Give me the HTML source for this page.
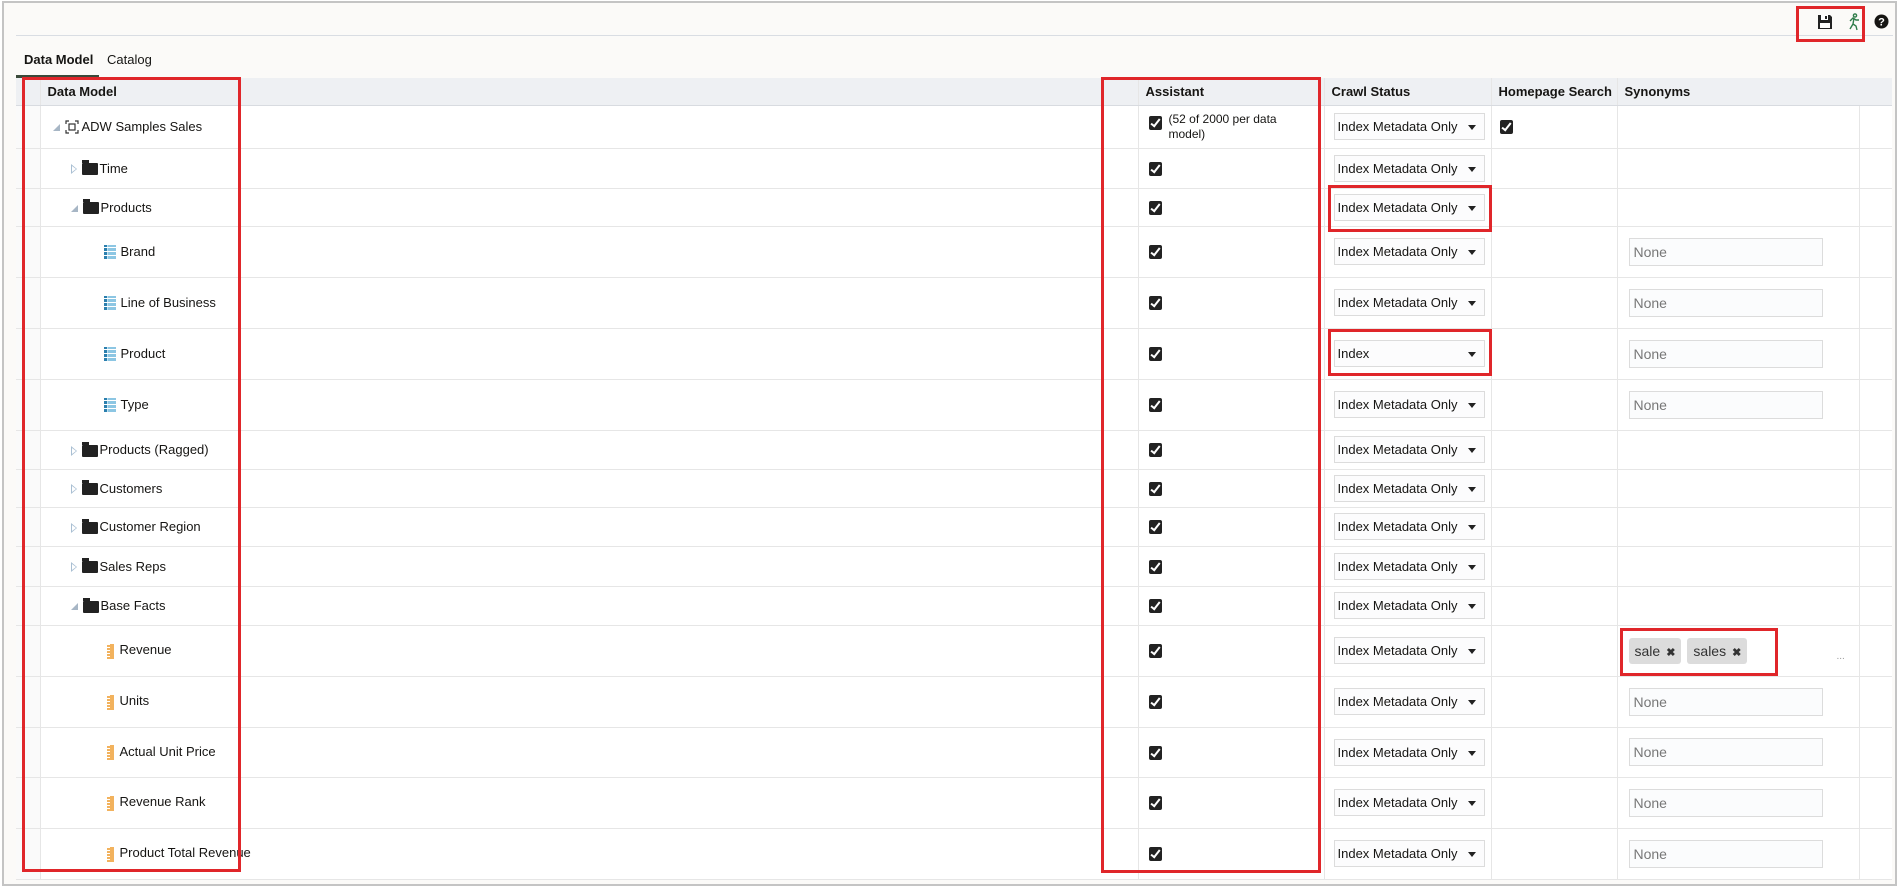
<!DOCTYPE html>
<html><head><meta charset="utf-8"><style>
*{box-sizing:border-box;margin:0;padding:0}
body{width:1899px;height:889px;background:#fff;font-family:"Liberation Sans",sans-serif;font-size:13px;color:#161513;position:relative;overflow:hidden}
.frame{position:absolute;left:2px;top:1px;width:1895px;height:885px;border:2px solid #c4c4c4;background:#fbfaf8}
.topline{position:absolute;left:16px;top:35px;width:1877px;height:1px;background:#d9dde3}
.tab{position:absolute;top:52px;font-size:13px}
.red{position:absolute;border:3px solid #e0262a;pointer-events:none;z-index:5}
table{position:absolute;left:16px;top:78px;border-collapse:collapse;table-layout:fixed;width:1876px;background:#fff}
td,th{border-bottom:1px solid #e6e6e6;border-right:1px solid #e6e6e6;vertical-align:middle;padding:0;white-space:nowrap}
th{height:27px;background:#eef0f3;text-align:left;font-weight:bold;font-size:13px;padding-left:7px;border-bottom:1px solid #d8dbe0}
td.g{background:#fafafa}
.sel{display:inline-block;width:151px;height:27px;border:1px solid #dcdcdc;background:#fcfcfd;line-height:25px;padding-left:3px;font-size:13px;position:relative;margin-left:9px}
.sel:after{content:"";position:absolute;right:8px;top:11px;border-left:4px solid transparent;border-right:4px solid transparent;border-top:5px solid #222}
.cb{display:inline-block;width:13px;height:14px;background:#222;border-radius:2px;position:relative;vertical-align:middle}
.cb:after{content:"";position:absolute;left:4px;top:1px;width:3px;height:8px;border:solid #fff;border-width:0 2px 2px 0;transform:rotate(38deg)}
.none{display:inline-block;width:194px;height:28px;border:1px solid #dcdcdc;background:#fbfcfd;color:#777;line-height:26px;padding-left:4px;font-size:14px;margin-left:11px}
.fold{display:inline-block;width:16px;height:12px;background:#222;vertical-align:middle;position:relative;margin-right:2px;border-radius:1px}
.fold:before{content:"";position:absolute;left:0;top:-3px;width:7px;height:3px;background:#222}
.exp{display:inline-block;width:0;height:0;border-top:5px solid transparent;border-bottom:5px solid transparent;border-left:6px solid #a9bfd3;vertical-align:middle;margin-right:5px;position:relative}
.exp:after{content:"";position:absolute;left:-5px;top:-3px;border-top:3px solid transparent;border-bottom:3px solid transparent;border-left:4px solid #fff}
.col{display:inline-block;width:0;height:0;border-left:7px solid transparent;border-bottom:7px solid #a7b6c5;vertical-align:middle;margin-right:5px}
.attr{display:inline-block;width:12px;height:14px;vertical-align:middle;margin-right:5px;background:
linear-gradient(90deg,#2b7fae 0 3px,#bfe0f0 3px 4px,#8cc6e3 4px 12px);position:relative}
.attr:after{content:"";position:absolute;left:0;top:0;right:0;bottom:0;background:repeating-linear-gradient(0deg,transparent 0 3px,#fff 3px 4px)}
.meas{display:inline-block;width:7px;height:15px;vertical-align:middle;margin-right:6px;background:#f2b25d;position:relative}
.meas:after{content:"";position:absolute;left:0;top:0;width:3px;height:100%;background:repeating-linear-gradient(0deg,#f2b25d 0 2px,#fff 2px 3px)}
.tag{display:inline-block;height:26px;background:#dcdcdc;border-radius:3px;line-height:26px;padding:0 6px;font-size:14px;color:#333;margin-right:6px}
.tag b{font-size:11px;margin-left:6px}
.l0{padding-left:12px}.l1{padding-left:30px}.l2{padding-left:63px}.l3{padding-left:66px}
</style></head><body>
<div class="frame"></div>
<div class="topline"></div>
<svg style="position:absolute;left:1817px;top:14px" width="16" height="16" viewBox="0 0 16 16"><path d="M1 1h12l2 2v12H1z" fill="#222"/><rect x="4" y="1" width="7" height="5" fill="#fff"/><rect x="8" y="2" width="2" height="3" fill="#222"/><rect x="3" y="9" width="10" height="5" fill="#fff"/></svg>
<svg style="position:absolute;left:1847px;top:13px" width="14" height="18" viewBox="0 0 14 18"><g stroke="#2f7d4a" stroke-width="1.4" fill="none"><circle cx="8" cy="2.5" r="1.6"/><path d="M7 5l-1 6 -3 5M6 11l3 2 1 4M3 8l3-3 3 2 3 0"/></g></svg>
<svg style="position:absolute;left:1874px;top:14px" width="15" height="15" viewBox="0 0 15 15"><circle cx="7.5" cy="7.5" r="7" fill="#161513"/><text x="7.5" y="11.5" font-size="11" font-weight="bold" fill="#fff" text-anchor="middle" font-family="Liberation Sans">?</text></svg>
<div class="tab" style="left:24px;font-weight:bold">Data Model</div>
<div style="position:absolute;left:16px;top:75px;width:83px;height:3px;background:#3a4a3a"></div>
<div class="tab" style="left:107px">Catalog</div>

<table>
<colgroup><col style="width:24px"><col style="width:1098px"><col style="width:186px"><col style="width:167px"><col style="width:126px"><col style="width:242px"><col style="width:33px"></colgroup>
<tr><th style="background:#eef0f3"></th><th>Data Model</th><th>Assistant</th><th>Crawl Status</th><th>Homepage Search</th><th style="border-right:none">Synonyms</th><th style="border-right:none"></th></tr>
<tr style="height:43px"><td class="g"></td><td class="l0"><span class="col"></span><svg width="14" height="14" viewBox="0 0 14 14" style="vertical-align:middle;margin-right:3px"><g fill="none" stroke="#333" stroke-width="1.2"><path d="M1 4V1h3M10 1h3v3M13 10v3h-3M4 13H1v-3"/><rect x="4" y="4" width="6" height="6"/></g></svg>ADW Samples Sales</td><td style="padding-left:10px"><span class="cb" style="vertical-align:top;margin-top:4px"></span><span style="display:inline-block;margin-left:7px;font-size:12px;line-height:15px;white-space:normal;width:140px;vertical-align:top">(52 of 2000 per data model)</span></td><td><span class="sel">Index Metadata Only</span></td><td style="padding-left:8px"><span class="cb"></span></td><td></td><td style="border-right:none"></td></tr>
<tr style="height:40px"><td class="g"></td><td class="l1"><span class="exp"></span><span class="fold"></span>Time</td><td style="padding-left:10px"><span class="cb"></span></td><td><span class="sel">Index Metadata Only</span></td><td></td><td></td><td style="border-right:none"></td></tr>
<tr style="height:38px"><td class="g"></td><td class="l1"><span class="col"></span><span class="fold"></span>Products</td><td style="padding-left:10px"><span class="cb"></span></td><td><span class="sel">Index Metadata Only</span></td><td></td><td></td><td style="border-right:none"></td></tr>
<tr style="height:51px"><td class="g"></td><td class="l2"><span class="attr"></span>Brand</td><td style="padding-left:10px"><span class="cb"></span></td><td><span class="sel">Index Metadata Only</span></td><td></td><td><span class="none">None</span></td><td style="border-right:none"></td></tr>
<tr style="height:51px"><td class="g"></td><td class="l2"><span class="attr"></span>Line of Business</td><td style="padding-left:10px"><span class="cb"></span></td><td><span class="sel">Index Metadata Only</span></td><td></td><td><span class="none">None</span></td><td style="border-right:none"></td></tr>
<tr style="height:51px"><td class="g"></td><td class="l2"><span class="attr"></span>Product</td><td style="padding-left:10px"><span class="cb"></span></td><td><span class="sel">Index</span></td><td></td><td><span class="none">None</span></td><td style="border-right:none"></td></tr>
<tr style="height:51px"><td class="g"></td><td class="l2"><span class="attr"></span>Type</td><td style="padding-left:10px"><span class="cb"></span></td><td><span class="sel">Index Metadata Only</span></td><td></td><td><span class="none">None</span></td><td style="border-right:none"></td></tr>
<tr style="height:39px"><td class="g"></td><td class="l1"><span class="exp"></span><span class="fold"></span>Products (Ragged)</td><td style="padding-left:10px"><span class="cb"></span></td><td><span class="sel">Index Metadata Only</span></td><td></td><td></td><td style="border-right:none"></td></tr>
<tr style="height:38px"><td class="g"></td><td class="l1"><span class="exp"></span><span class="fold"></span>Customers</td><td style="padding-left:10px"><span class="cb"></span></td><td><span class="sel">Index Metadata Only</span></td><td></td><td></td><td style="border-right:none"></td></tr>
<tr style="height:39px"><td class="g"></td><td class="l1"><span class="exp"></span><span class="fold"></span>Customer Region</td><td style="padding-left:10px"><span class="cb"></span></td><td><span class="sel">Index Metadata Only</span></td><td></td><td></td><td style="border-right:none"></td></tr>
<tr style="height:40px"><td class="g"></td><td class="l1"><span class="exp"></span><span class="fold"></span>Sales Reps</td><td style="padding-left:10px"><span class="cb"></span></td><td><span class="sel">Index Metadata Only</span></td><td></td><td></td><td style="border-right:none"></td></tr>
<tr style="height:39px"><td class="g"></td><td class="l1"><span class="col"></span><span class="fold"></span>Base Facts</td><td style="padding-left:10px"><span class="cb"></span></td><td><span class="sel">Index Metadata Only</span></td><td></td><td></td><td style="border-right:none"></td></tr>
<tr style="height:51px"><td class="g"></td><td class="l3"><span class="meas"></span>Revenue</td><td style="padding-left:10px"><span class="cb"></span></td><td><span class="sel">Index Metadata Only</span></td><td></td><td style="padding-left:11px;position:relative"><span class="tag">sale<b>✖</b></span><span class="tag">sales<b>✖</b></span><span style="position:absolute;left:219px;top:25px;color:#999;font-size:10px">...</span></td><td style="border-right:none"></td></tr>
<tr style="height:51px"><td class="g"></td><td class="l3"><span class="meas"></span>Units</td><td style="padding-left:10px"><span class="cb"></span></td><td><span class="sel">Index Metadata Only</span></td><td></td><td><span class="none">None</span></td><td style="border-right:none"></td></tr>
<tr style="height:50px"><td class="g"></td><td class="l3"><span class="meas"></span>Actual Unit Price</td><td style="padding-left:10px"><span class="cb"></span></td><td><span class="sel">Index Metadata Only</span></td><td></td><td><span class="none">None</span></td><td style="border-right:none"></td></tr>
<tr style="height:51px"><td class="g"></td><td class="l3"><span class="meas"></span>Revenue Rank</td><td style="padding-left:10px"><span class="cb"></span></td><td><span class="sel">Index Metadata Only</span></td><td></td><td><span class="none">None</span></td><td style="border-right:none"></td></tr>
<tr style="height:51px"><td class="g"></td><td class="l3"><span class="meas"></span>Product Total Revenue</td><td style="padding-left:10px"><span class="cb"></span></td><td><span class="sel">Index Metadata Only</span></td><td></td><td><span class="none">None</span></td><td style="border-right:none"></td></tr>
</table>

<div class="red" style="left:1796px;top:6px;width:69px;height:36px"></div>
<div class="red" style="left:22px;top:77px;width:219px;height:795px"></div>
<div class="red" style="left:1101px;top:77px;width:220px;height:796px"></div>
<div class="red" style="left:1328px;top:185px;width:164px;height:47px"></div>
<div class="red" style="left:1328px;top:329px;width:164px;height:47px"></div>
<div class="red" style="left:1620px;top:628px;width:158px;height:48px"></div>
</body></html>
